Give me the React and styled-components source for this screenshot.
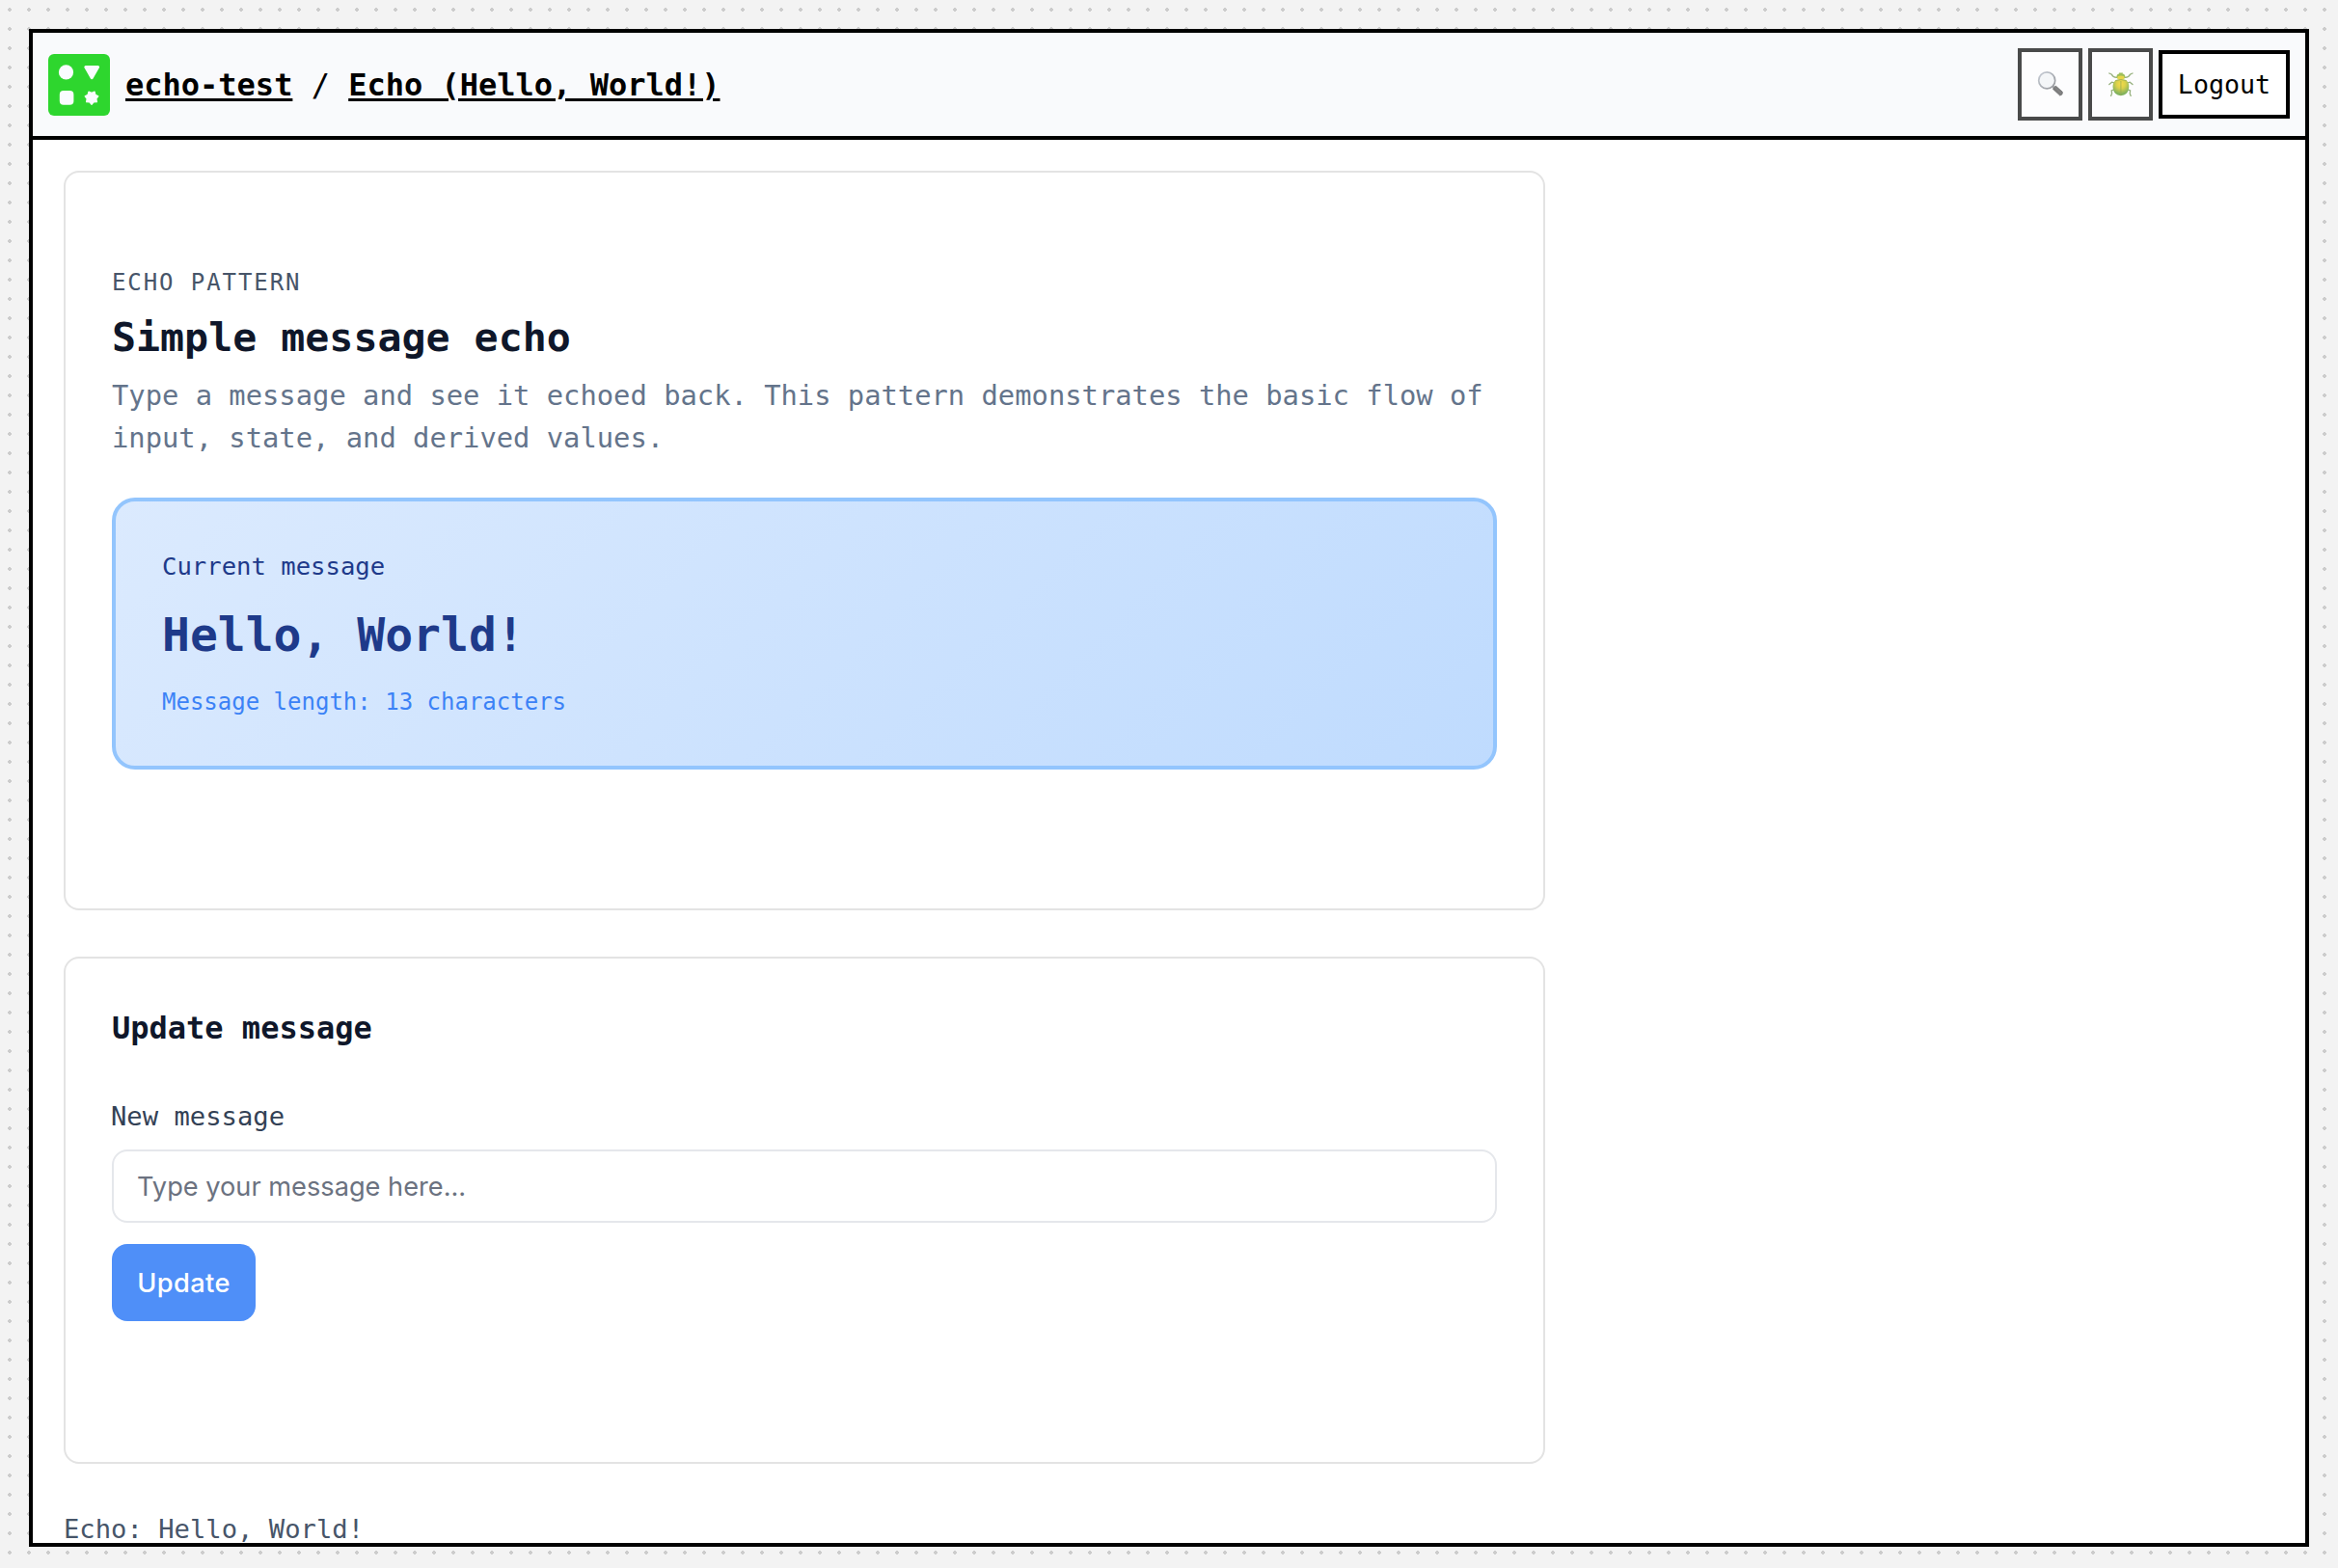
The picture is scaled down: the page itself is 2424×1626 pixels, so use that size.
import React from "react";
import styled, { createGlobalStyle } from "styled-components";

const mono = `"DejaVu Sans Mono", "Liberation Mono", monospace`;
const sans = `Inter, "Liberation Sans", sans-serif`;

const GlobalStyle = createGlobalStyle`
  *, *::before, *::after { box-sizing: border-box; }
  body {
    margin: 0;
    background-color: #f3f3f3;
    background-image: radial-gradient(circle, #ccc 2px, transparent 2px);
    background-size: 20px 20px;
    font-family: ${mono};
    overflow: hidden;
  }
`;

const Page = styled.div`
  height: 1626px;
  padding: 30px 30px 22px;
`;

const Frame = styled.div`
  height: 100%;
  display: flex;
  flex-direction: column;
  border: 4px solid #000;
  background: #fff;
  overflow: hidden;
`;

const Header = styled.header`
  flex: none;
  height: 111px;
  display: flex;
  align-items: center;
  justify-content: space-between;
  padding: 0 16px;
  background: #f9fafc;
  border-bottom: 4px solid #000;
`;

const Crumbs = styled.nav`
  display: flex;
  align-items: center;
  gap: 16px;
`;

const Trail = styled.div`
  font-size: 32px;
  line-height: 40px;
  white-space: pre;
  color: #000;
`;

const CrumbLink = styled.a`
  font-weight: 700;
  color: #000;
  text-decoration: underline;
  text-decoration-thickness: 3px;
  text-underline-offset: 3px;
`;

const Actions = styled.div`
  display: flex;
  align-items: center;
  gap: 6px;
`;

const IconButton = styled.button`
  width: 67px;
  height: 75px;
  display: grid;
  place-items: center;
  padding: 0;
  border: 4px solid #000;
  background: #fff;
  opacity: 0.7;
`;

const LogoutButton = styled.button`
  width: 136px;
  height: 71px;
  padding: 0;
  border: 4px solid #000;
  background: #fff;
  color: #000;
  font: 26.67px ${mono};
`;

const Main = styled.main`
  width: 1600px;
  padding: 32px 32px 0;
  display: flex;
  flex-direction: column;
  gap: 48px;
`;

const Card = styled.section`
  width: 1536px;
  height: ${(p) => p.$height}px;
  flex: none;
  padding: ${(p) => p.$top}px 48px 0;
  border: 2px solid #e3e3e3;
  border-radius: 16px;
  background: #fff;
`;

const Line = styled.p`
  margin: ${(p) => p.$mt || 0}px 0 0;
  font-size: ${(p) => p.$size}px;
  line-height: ${(p) => p.$lh}px;
  font-weight: ${(p) => (p.$bold ? 700 : 400)};
  color: ${(p) => p.$color};
`;

const Eyebrow = styled(Line)`
  letter-spacing: 0.08em;
  text-transform: uppercase;
`;

const MessageBox = styled.div`
  height: 282px;
  margin-top: 40px;
  padding: 48px 48px 0;
  border: 4px solid #93c5fd;
  border-radius: 24px;
  background: linear-gradient(135deg, #dbeafe, #bfdbfe);
`;

const Field = styled.label`
  display: block;
  margin-top: 48px;
  font-size: 27.2px;
  line-height: 40px;
  color: #334155;
  text-indent: -1px;
`;

const Input = styled.input`
  display: block;
  width: 100%;
  height: 76px;
  margin-top: 14px;
  padding: 1px 24px 0;
  border: 2px solid #e5e7eb;
  border-radius: 16px;
  background: #fff;
  font: 27.2px ${sans};
  &::placeholder { color: #6b7280; opacity: 1; }
`;

const SubmitButton = styled.button`
  width: 149px;
  height: 80px;
  margin-top: 22px;
  padding: 1px 0 0;
  border: 0;
  border-radius: 16px;
  background: #4f8ff8;
  color: #fff;
  font: 500 27.2px ${sans};
  letter-spacing: 0.4px;
`;

const STAR_POINTS = Array.from({ length: 14 }, (_, i) => {
  const angle = Math.PI / 2 + (i * Math.PI) / 7;
  const radius = i % 2 ? 5 : 7;
  return `${(45 + radius * Math.cos(angle)).toFixed(2)},${(45.4 + radius * Math.sin(angle)).toFixed(2)}`;
}).join(" ");

const Logo = () => (
  <svg width="64" height="64" viewBox="0 0 64 64">
    <rect width="64" height="64" rx="6" fill="#2ed62e" />
    <g fill="#fafcff" stroke="#fafcff" strokeLinejoin="round">
      <circle cx="18.5" cy="18.9" r="7.6" stroke="none" />
      <path d="M38.8 13.5H51.6L45.2 24.7Z" strokeWidth="3" />
      <rect x="11.8" y="38" width="14.6" height="14.8" rx="4" stroke="none" />
      <polygon points={STAR_POINTS} strokeWidth="1.2" />
    </g>
  </svg>
);

const Magnifier = () => (
  <svg width="28" height="28" viewBox="0 0 28 28">
    <defs>
      <linearGradient id="rim" x1="0" y1="0" x2="1" y2="1">
        <stop offset="0" stopColor="#b4bcc8" />
        <stop offset="1" stopColor="#696b70" />
      </linearGradient>
      <linearGradient id="grip" x1="0" y1="1" x2="1" y2="0">
        <stop offset="0" stopColor="#111" />
        <stop offset="0.55" stopColor="#555" />
        <stop offset="1" stopColor="#222" />
      </linearGradient>
    </defs>
    <path d="M15.8 15l2.4 2.2" stroke="#8a8c90" strokeWidth="2.4" />
    <path d="M16.4 18.2L19.3 15.1L26.3 21.3Q27 24.3 23.8 25.1Z" fill="url(#grip)" stroke="#333" strokeWidth="0.8" strokeLinejoin="round" />
    <circle cx="10.2" cy="9.4" r="8.5" fill="#f3f5f7" stroke="url(#rim)" strokeWidth="1.7" />
  </svg>
);

const Beetle = () => (
  <svg width="28" height="28" viewBox="0 0 28 28">
    <defs>
      <radialGradient id="shell" cx="0.5" cy="0.28" r="0.62">
        <stop offset="0" stopColor="#f4d000" />
        <stop offset="0.45" stopColor="#cfc000" />
        <stop offset="1" stopColor="#4f951c" />
      </radialGradient>
    </defs>
    <g fill="none" stroke="#6d9248" strokeWidth="1.3" strokeLinecap="round">
      <path d="M9.4 6.4Q5.6 6 4.4 3.2L1.8 2M18.4 6.4Q22.2 6 23.4 3.2L26 2" />
      <path d="M7.6 12.2L4.6 11.2L1.8 13.6M20.2 12.2L23.2 11.2L26 13.6" />
      <path d="M6.8 18.8L4.2 20L4.6 23L3.6 25.4M21 18.8L23.6 20L23.2 23L24.2 25.4" />
    </g>
    <path d="M9.2 6.8Q9.6 2.6 12.2 2.6L11.8 1.6H16L15.6 2.6Q18.2 2.6 18.6 6.8Q14 10 9.2 6.8Z" fill="#75a516" />
    <ellipse cx="13.9" cy="6.6" rx="3.6" ry="2.2" fill="#dfc800" />
    <path d="M8 9.4Q14 7.2 19.8 9.4Q22.6 12 22.2 17Q21 25 13.9 25.2Q6.8 25 5.6 17Q5.2 12 8 9.4Z" fill="url(#shell)" />
    <path d="M13.9 10V24.8M8.2 9.5Q14 7.6 19.6 9.5" fill="none" stroke="#718a0b" strokeWidth="0.8" />
  </svg>
);

export default function App() {
  return (
    <>
      <GlobalStyle />
      <Page>
        <Frame>
          <Header>
            <Crumbs>
              <Logo />
              <Trail>
                <CrumbLink>echo-test</CrumbLink> / <CrumbLink>Echo (Hello, World!)</CrumbLink>
              </Trail>
            </Crumbs>
            <Actions>
              <IconButton aria-label="Search"><Magnifier /></IconButton>
              <IconButton aria-label="Debug"><Beetle /></IconButton>
              <LogoutButton>Logout</LogoutButton>
            </Actions>
          </Header>
          <Main>
            <Card $height={767} $top={96}>
              <Eyebrow $size={24} $lh={36} $color="#475569">Echo pattern</Eyebrow>
              <Line as="h1" $size={41.6} $lh={62} $mt={8} $bold $color="#0f172a">Simple message echo</Line>
              <Line $size={28.8} $lh={44} $mt={7} $color="#64748b">
                Type a message and see it echoed back. This pattern demonstrates the basic flow of input, state, and derived values.
              </Line>
              <MessageBox>
                <Line $size={25.6} $lh={38} $color="#1e3a8a">Current message</Line>
                <Line $size={48} $lh={72} $mt={16} $bold $color="#1e3a8a">Hello, World!</Line>
                <Line $size={24} $lh={36} $mt={16} $color="#3b82f6">Message length: 13 characters</Line>
              </MessageBox>
            </Card>
            <Card $height={526} $top={48}>
              <Line as="h2" $size={32} $lh={48} $bold $color="#0f172a">Update message</Line>
              <Field htmlFor="message">New message</Field>
              <Input id="message" placeholder="Type your message here..." />
              <SubmitButton>Update</SubmitButton>
            </Card>
            <Line $size={27.2} $lh={40} $color="#475569">Echo: Hello, World!</Line>
          </Main>
        </Frame>
      </Page>
    </>
  );
}
